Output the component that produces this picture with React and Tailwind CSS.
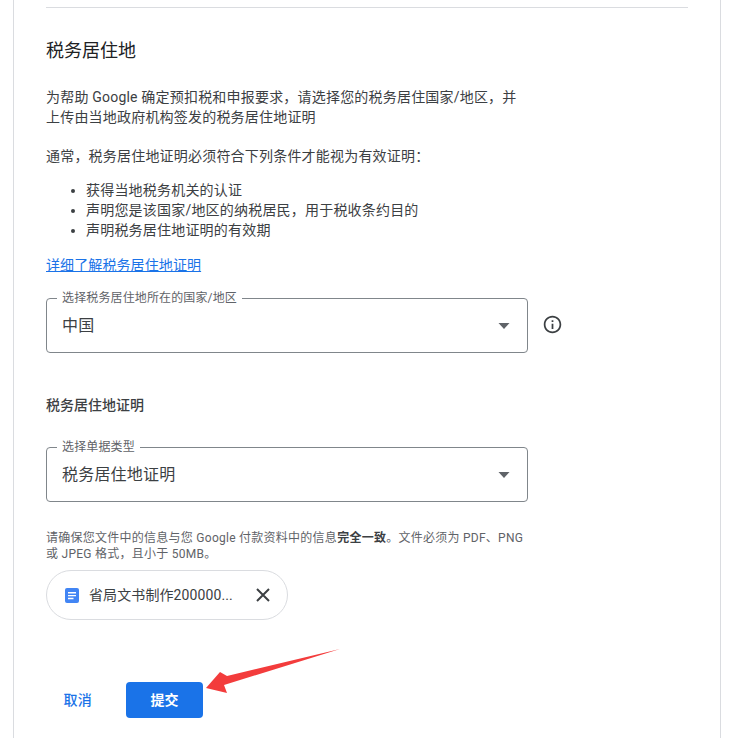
const OutlinedSelect = ({ label, value }) => (
  <div className="relative flex h-[55px] w-[482px] items-center justify-between rounded border border-[#80868b] bg-white pl-[15px] pr-[17px]">
    <span className="absolute -top-[9px] left-[10px] bg-white px-[5px] text-xs leading-4 tracking-[0.13px] text-[#5f6368]">
      {label}
    </span>
    <span className="text-base text-[#3c4043]">{value}</span>
    <svg width="12" height="6" viewBox="0 0 12 6" className="fill-[#5f6368]">
      <path d="M0.5 0h11L6 6z" />
    </svg>
  </div>
);

const InfoIcon = () => (
  <svg width="21" height="21" viewBox="0 0 24 24" className="-mt-[2px] fill-[#3c4043]">
    <path d="M11 7h2v2h-2zm0 4h2v6h-2zm1-9C6.48 2 2 6.48 2 12s4.48 10 10 10 10-4.48 10-10S17.52 2 12 2zm0 18c-4.41 0-8-3.59-8-8s3.59-8 8-8 8 3.59 8 8-3.59 8-8 8z" />
  </svg>
);

const DocIcon = () => (
  <svg width="14" height="15" viewBox="0 0 14 15">
    <rect width="14" height="15" rx="2" fill="#4285f4" />
    <path d="M3 4h8v1.4H3zM3 6.9h8v1.4H3zM3 9.8h5.5v1.4H3z" fill="#fff" />
  </svg>
);

const CloseIcon = () => (
  <svg width="14" height="14" viewBox="0 0 14 14" className="stroke-[#3c4043]" fill="none" strokeWidth="2">
    <path d="M1 1l12 12M13 1L1 13" />
  </svg>
);

// red annotation arrow sitting over the submit button
const Arrow = () => (
  <svg width="140" height="52" viewBox="0 0 140 52" className="absolute left-[204px] top-[647px]">
    <path d="M2 41L16 25L23 29L136 2L20 38L23 46Z" fill="#f33c3c" />
  </svg>
);

export default function App() {
  return (
    <div
      className="relative h-[738px] w-[734px] overflow-hidden bg-white tracking-[0.2px] text-[#3c4043]"
      style={{ fontFamily: 'Roboto, "Noto Sans CJK SC", sans-serif' }}
    >
      <div className="ml-[13px] h-full w-[708px] border-x border-[#dadce0] px-[32px]">
        <div className="h-[8px] w-[642px] border-b border-[#dadce0]" />

        <h2 className="mt-[31px] text-lg leading-6 tracking-normal text-[#202124]">税务居住地</h2>

        <p className="mt-[24px] w-[474px] text-sm leading-5">
          为帮助 Google 确定预扣税和申报要求，请选择您的税务居住国家/地区，并上传由当地政府机构签发的税务居住地证明
        </p>
        <p className="mt-[19px] text-sm leading-5">通常，税务居住地证明必须符合下列条件才能视为有效证明：</p>

        <ul className="mt-[14px] list-disc pl-[40px] text-sm leading-5">
          <li>获得当地税务机关的认证</li>
          <li>声明您是该国家/地区的纳税居民，用于税收条约目的</li>
          <li>声明税务居住地证明的有效期</li>
        </ul>

        <a href="#" className="mt-[15px] block text-sm leading-5 tracking-[0.1px] text-[#1a73e8] underline">
          详细了解税务居住地证明
        </a>

        <div className="mt-[23px] flex items-center gap-[14px]">
          <OutlinedSelect label="选择税务居住地所在的国家/地区" value="中国" />
          <InfoIcon />
        </div>

        <h3 className="mt-[42px] text-sm font-medium leading-5 tracking-normal text-[#3c4043]">税务居住地证明</h3>

        <div className="mt-[32px]">
          <OutlinedSelect label="选择单据类型" value="税务居住地证明" />
        </div>

        <p className="mt-[28px] w-[480px] text-xs leading-4 tracking-[0.26px] text-[#5f6368]">
          请确保您文件中的信息与您 Google 付款资料中的信息<b className="font-bold text-[#3c4043]">完全一致</b>。文件必须为 PDF、PNG 或 JPEG 格式，且小于 50MB。
        </p>

        <div className="mt-[8px] flex h-[50px] w-[242px] items-center rounded-full border border-[#dadce0] pl-[18px] pr-[17px]">
          <DocIcon />
          <span className="ml-[10px] flex-1 whitespace-nowrap text-sm tracking-[0.1px]">省局文书制作200000...</span>
          <CloseIcon />
        </div>

        <div className="mt-[62px] flex items-center gap-[34px] pl-[17.5px]">
          <button className="text-sm font-medium text-[#1a73e8]">取消</button>
          <button className="h-[36px] w-[77px] rounded bg-[#1a73e8] text-sm font-bold tracking-normal text-white">提交</button>
        </div>
      </div>
      <Arrow />
    </div>
  );
}
